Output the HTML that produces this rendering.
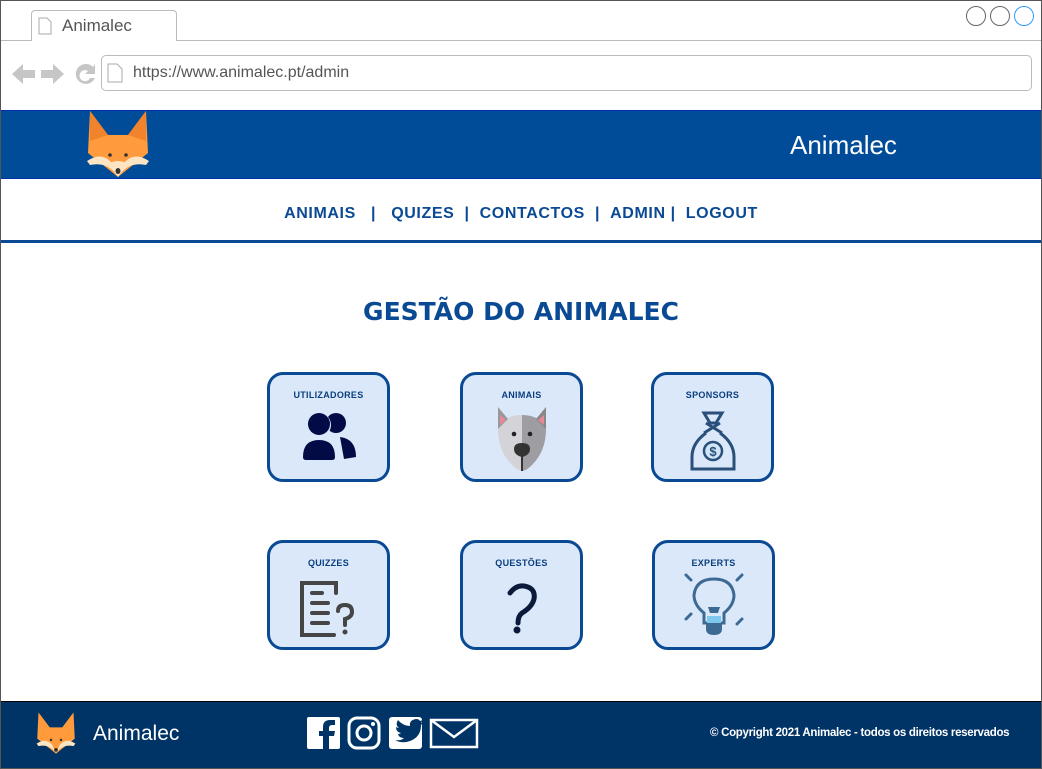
<!DOCTYPE html>
<html><head><meta charset="utf-8"><style>
*{margin:0;padding:0;box-sizing:border-box}
body{width:1042px;height:769px;position:relative;background:#fff;font-family:"Liberation Sans",sans-serif;overflow:hidden}
.abs{position:absolute}
.card{position:absolute;width:123px;height:110px;border:3px solid #0a4a94;border-radius:16px;background:#dae8fa;text-align:center}
.card .t{position:absolute;top:15px;left:0;right:0;font-size:9px;font-weight:bold;color:#0a3f7e;letter-spacing:.3px}
.card svg{position:absolute;left:50%;transform:translateX(-50%)}
.nav{position:absolute;top:205px;left:0;width:1042px;text-align:center;font-weight:bold;font-size:16px;color:#0a4a94;letter-spacing:.6px}
</style></head><body>
<div class="abs" style="left:0;top:0;width:1042px;height:769px;border:1px solid #555"></div>
<div class="abs" style="left:1px;top:40px;width:1040px;height:1px;background:#bbb"></div>
<div class="abs" style="left:31px;top:10px;width:146px;height:31px;border:1px solid #bbb;border-bottom:none;border-radius:4px 4px 0 0;background:#fff"></div>
<svg class="abs" style="left:38px;top:17px" width="14" height="18"><path d="M1 1h8l4 4v12H1z" fill="#fff" stroke="#aaa"/></svg>
<div class="abs" style="left:62px;top:16px;font-size:17px;color:#555">Animalec</div>
<svg class="abs" style="left:965px;top:5px" width="74" height="22"><circle cx="11" cy="11" r="9.5" fill="none" stroke="#666"/><circle cx="35" cy="11" r="9.5" fill="none" stroke="#666"/><circle cx="59" cy="11" r="9.5" fill="none" stroke="#39f"/></svg>
<svg class="abs" style="left:11px;top:62px" width="90" height="24"><path d="M1 12l11-10v6h12v8H12v6z" fill="#c6c6c6"/><path d="M53 12L42 2v6H30v8h12v6z" fill="#c6c6c6"/><path d="M82 5a10 10 0 1 0 2 11h-5a5.5 5.5 0 1 1-2-7l-3 3h10V2z" fill="#c6c6c6"/></svg>
<div class="abs" style="left:101px;top:55px;width:931px;height:36px;border:1px solid #bbb;border-radius:5px"></div>
<svg class="abs" style="left:107px;top:63px" width="16" height="20"><path d="M1 1h9l5 5v13H1z" fill="#fff" stroke="#aaa"/></svg>
<div class="abs" style="left:133px;top:64px;font-size:16px;color:#555">https://www.animalec.pt/admin</div>
<div class="abs" style="left:1px;top:110px;width:1040px;height:69px;background:#004c99;border-top:1px solid #0030b0;border-bottom:1px solid #0030b0"></div>
<svg class="abs" style="left:86px;top:111px" width="64" height="66" viewBox="0 0 64 66"><path d="M4 0L22 24H42L60 0L62 42L32 66L2 42Z" fill="#ff9b3d"/><path d="M4 0L22 24L4 30Z" fill="#f0832b"/><path d="M60 0L42 24L60 30Z" fill="#f0832b"/><path d="M1 50Q16 40 26 52L32 66L38 52Q48 40 63 50L60 54Q42 50 32 66Q22 50 4 54Z" fill="#fde4c3"/><path d="M24 52Q32 48 40 52L32 66Z" fill="#fde4c3"/><circle cx="24" cy="44" r="1.8" fill="#333"/><circle cx="40" cy="44" r="1.8" fill="#333"/><ellipse cx="32" cy="60" rx="2.5" ry="3" fill="#333"/></svg>
<div class="abs" style="left:790px;top:130px;font-size:26px;color:#fff">Animalec</div>
<div class="nav">ANIMAIS &nbsp; | &nbsp; QUIZES &nbsp;| &nbsp;CONTACTOS &nbsp;| &nbsp;ADMIN | &nbsp;LOGOUT</div>
<div class="abs" style="left:1px;top:240px;width:1040px;height:3px;background:#0a4a94"></div>
<div class="abs" style="left:0;top:297px;width:1042px;text-align:center;font-family:'DejaVu Sans',sans-serif;font-weight:bold;font-size:25px;color:#0a4a94;letter-spacing:0">GESTÃO DO ANIMALEC</div>

<div class="card" style="left:267px;top:372px"><div class="t">UTILIZADORES</div>
<svg style="top:36px" width="54" height="52" viewBox="0 0 54 52"><circle cx="34" cy="12" r="10" fill="#020b45"/><path d="M38 26Q54 28 54 46L42 48Z" fill="#020b45"/><circle cx="17" cy="14" r="12" fill="#dae8fa"/><circle cx="17" cy="13" r="11" fill="#020b45"/><path d="M0 46Q0 28 17 28Q34 28 34 46Q34 50 30 50H4Q0 50 0 46Z" fill="#020b45" stroke="#dae8fa" stroke-width="2"/></svg></div>

<div class="card" style="left:460px;top:372px"><div class="t">ANIMAIS</div>
<svg style="top:32px" width="52" height="64" viewBox="0 0 52 64"><path d="M26 8Q8 8 2 22Q2 44 16 58Q22 64 26 64Z" fill="#d4d4d8"/><path d="M26 8Q44 8 50 22Q50 44 36 58Q30 64 26 64Z" fill="#9d9da2"/><path d="M2 0L12 12L2 22Z" fill="#999"/><path d="M50 0L40 12L50 22Z" fill="#888"/><path d="M4 8L10 13L4 18Z" fill="#e8869a"/><path d="M48 8L42 13L48 18Z" fill="#e8869a"/><circle cx="18" cy="27" r="2.3" fill="#222"/><circle cx="34" cy="27" r="2.3" fill="#222"/><path d="M18 42Q18 36 26 36Q34 36 34 42Q34 48 26 50Q18 48 18 42Z" fill="#333"/><rect x="25" y="46" width="2" height="18" fill="#333"/></svg></div>

<div class="card" style="left:651px;top:372px"><div class="t">SPONSORS</div>
<svg style="top:36px" width="46" height="62" viewBox="0 0 46 62"><g fill="none" stroke="#2a4f7a" stroke-width="3"><path d="M14 2h18l-6 10h-6z"/><path d="M16 22Q2 32 2 46V58H44V46Q44 32 30 22"/><path d="M14 22L30 12M32 22L16 12"/></g><circle cx="23" cy="40" r="9" fill="#cfe6f7" stroke="#2a4f7a" stroke-width="2.5"/><text x="23" y="45" font-size="13" font-weight="bold" fill="#2a4f7a" text-anchor="middle" font-family="Liberation Sans">$</text></svg></div>

<div class="card" style="left:267px;top:540px"><div class="t">QUIZZES</div>
<svg style="top:38px" width="58" height="56" viewBox="0 0 58 56"><g fill="none" stroke="#454545" stroke-width="4" stroke-linecap="round"><path d="M36 12V2H2V54H34"/><path d="M12 12h10M12 22h16M12 32h16M12 42h16"/><path d="M38 30Q38 24 45 24Q52 24 52 31Q52 36 45 38V44"/></g><circle cx="45" cy="51" r="2.5" fill="#454545"/></svg></div>

<div class="card" style="left:460px;top:540px"><div class="t">QUESTÕES</div>
<svg style="top:40px" width="32" height="52" viewBox="0 0 32 52"><path d="M4 10Q10 2 18 3Q30 5 28 16Q26 24 16 30Q12 33 12 40" fill="none" stroke="#0b1a3a" stroke-width="5" stroke-linecap="round"/><circle cx="11" cy="47" r="3.5" fill="#0b1a3a"/></svg></div>

<div class="card" style="left:652px;top:540px"><div class="t">EXPERTS</div>
<svg style="top:30px" width="60" height="64" viewBox="0 0 60 64"><g fill="none" stroke="#3d6a93" stroke-width="3"><path d="M30 6Q12 6 10 22Q10 32 20 40V50H40V40Q50 32 50 22Q48 6 30 6Z"/><path d="M2 2l5 5M58 2l-5 5M2 46l5-5M58 46l-5 5" stroke-linecap="round"/></g><rect x="23" y="43" width="14" height="9" fill="#7ec8f0"/><path d="M22 50h16v6Q38 62 30 62Q22 62 22 56Z" fill="#3d6a93"/><path d="M24 34h12l-2 6h-8z" fill="#3d6a93"/></svg></div>

<div class="abs" style="left:1px;top:701px;width:1040px;height:67px;background:#003366;border-top:1px solid #000"></div>
<svg class="abs" style="left:36px;top:711px" width="40" height="44" viewBox="0 0 64 66"><path d="M4 0L22 24H42L60 0L62 42L32 66L2 42Z" fill="#ff9b3d"/><path d="M1 50Q16 40 26 52L32 66L38 52Q48 40 63 50L60 54Q42 50 32 66Q22 50 4 54Z" fill="#fde4c3"/><circle cx="24" cy="44" r="2" fill="#333"/><circle cx="40" cy="44" r="2" fill="#333"/><ellipse cx="32" cy="60" rx="3" ry="3" fill="#333"/></svg>
<div class="abs" style="left:93px;top:722px;font-size:21px;color:#fff">Animalec</div>
<svg class="abs" style="left:307px;top:716px" width="172" height="34" viewBox="0 0 172 34"><rect x="0" y="1" width="33" height="32" rx="2" fill="#fff"/><path d="M22 33V20h5l1-5h-6v-3q0-3 3-3h3V4h-5q-7 0-7 7v4h-4v5h4v13z" fill="#003366"/><rect x="42" y="2" width="30" height="30" rx="8" fill="none" stroke="#fff" stroke-width="3"/><circle cx="57" cy="17" r="7" fill="none" stroke="#fff" stroke-width="3"/><circle cx="66" cy="8" r="2" fill="#fff"/><rect x="82" y="1" width="33" height="32" rx="3" fill="#fff"/><path d="M88 24q6 1 9-2-5 0-6-4 2 0 3-1-5-1-5-6 2 1 3 1-4-3-1-8 5 6 12 6-1-6 6-7 3 0 4 2l3-1-2 3 3-1-3 3q0 12-11 16-8 3-15-1z" fill="#003366"/><rect x="124" y="4" width="46" height="27" fill="none" stroke="#fff" stroke-width="2.5"/><path d="M124 4l23 17 23-17" fill="none" stroke="#fff" stroke-width="2.5"/></svg>
<div class="abs" style="left:710px;top:727px;font-size:11.5px;font-weight:bold;color:#fff;letter-spacing:-.3px">© Copyright 2021 Animalec - todos os direitos reservados</div>
</body></html>
